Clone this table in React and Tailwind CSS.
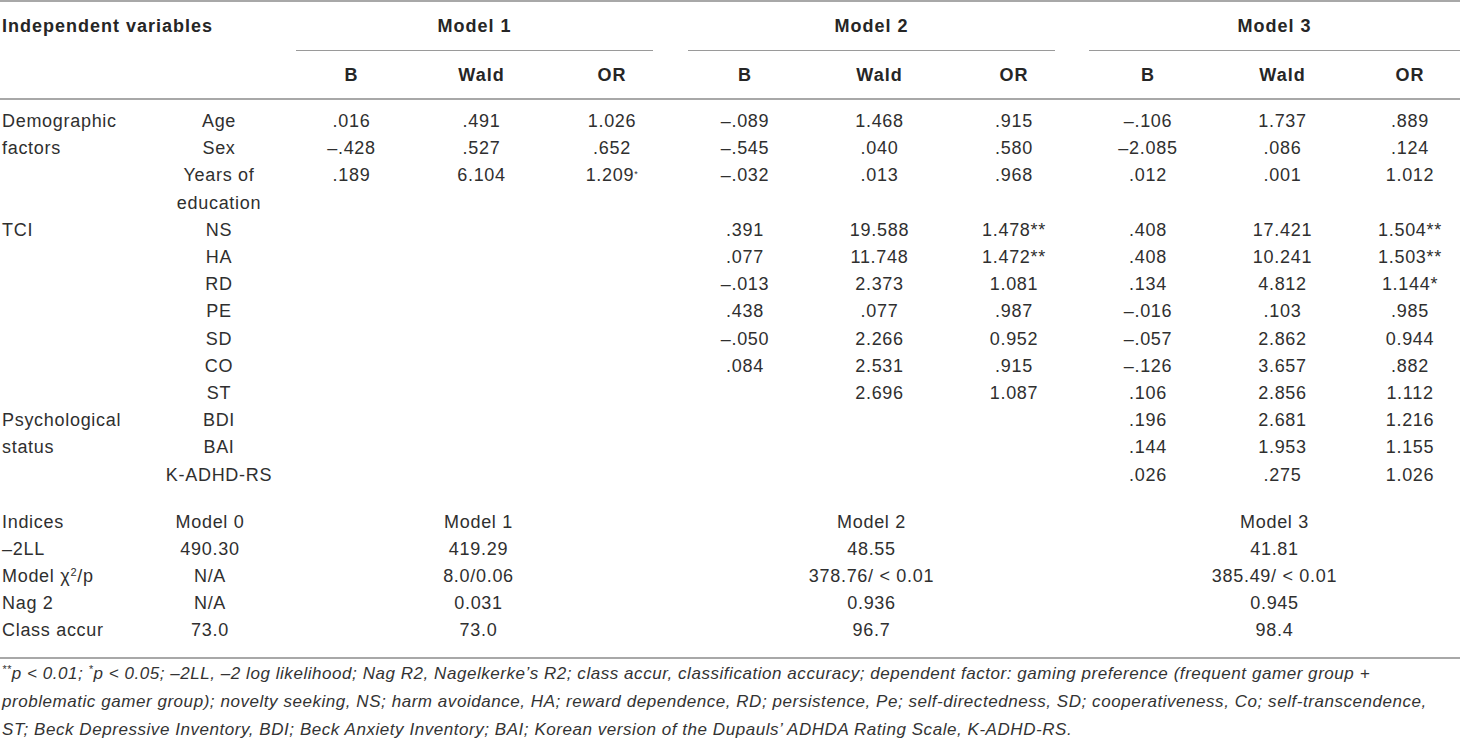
import React from "react";

const COLS =
  "grid grid-cols-[152px_134px_131px_129px_132px_134px_135px_134px_134px_135px_110px]";

const rows = [
  ["Demographic", "Age", ".016", ".491", "1.026", "–.089", "1.468", ".915", "–.106", "1.737", ".889"],
  ["factors", "Sex", "–.428", ".527", ".652", "–.545", ".040", ".580", "–2.085", ".086", ".124"],
  ["", "Years of education", ".189", "6.104", "1.209†", "–.032", ".013", ".968", ".012", ".001", "1.012"],
  ["TCI", "NS", "", "", "", ".391", "19.588", "1.478**", ".408", "17.421", "1.504**"],
  ["", "HA", "", "", "", ".077", "11.748", "1.472**", ".408", "10.241", "1.503**"],
  ["", "RD", "", "", "", "–.013", "2.373", "1.081", ".134", "4.812", "1.144*"],
  ["", "PE", "", "", "", ".438", ".077", ".987", "–.016", ".103", ".985"],
  ["", "SD", "", "", "", "–.050", "2.266", "0.952", "–.057", "2.862", "0.944"],
  ["", "CO", "", "", "", ".084", "2.531", ".915", "–.126", "3.657", ".882"],
  ["", "ST", "", "", "", "", "2.696", "1.087", ".106", "2.856", "1.112"],
  ["Psychological", "BDI", "", "", "", "", "", "", ".196", "2.681", "1.216"],
  ["status", "BAI", "", "", "", "", "", "", ".144", "1.953", "1.155"],
  ["", "K-ADHD-RS", "", "", "", "", "", "", ".026", ".275", "1.026"],
];

function Cell({ v, i }) {
  let content = v;
  if (v.endsWith("†")) {
    content = (
      <>
        {v.slice(0, -1)}
        <sup className="text-[9px]">*</sup>
      </>
    );
  }
  if (i === 0) return <div className="pl-[2px] text-left whitespace-nowrap">{content}</div>;
  if (i === 10) return <div className="pl-[10px] text-center">{content}</div>;
  return <div className="text-center">{content}</div>;
}

const indices = [
  [<>Indices</>, "Model 0", "Model 1", "Model 2", "Model 3"],
  [<>–2LL</>, "490.30", "419.29", "48.55", "41.81"],
  [
    <>
      Model χ<sup className="text-[11px]">2</sup>/p
    </>,
    "N/A",
    "8.0/0.06",
    "378.76/ < 0.01",
    "385.49/ < 0.01",
  ],
  [<>Nag 2</>, "N/A", "0.031", "0.936", "0.945"],
  [<>Class accur</>, "73.0", "73.0", "96.7", "98.4"],
];

export default function App() {
  return (
    <div className="w-[1460px] h-[738px] overflow-hidden bg-white text-[#2f2f2f] font-['Liberation_Sans','Helvetica','Arial',sans-serif] text-[18px] tracking-[0.7px]">
      <div className="border-t-2 border-[#a8a8a8]">
        {/* header row 1 */}
        <div className={`${COLS} pt-[11px] leading-[27px] font-bold tracking-[1px] text-[#262626]`}>
          <div className="col-span-2 pl-[2px] whitespace-nowrap">Independent variables</div>
          <div className="col-span-3 ml-[10px] mr-[25px] text-center border-b border-[#9a9a9a] pb-[10px]">Model 1</div>
          <div className="col-span-3 ml-[10px] mr-[26px] text-center border-b border-[#9a9a9a] pb-[10px]">Model 2</div>
          <div className="col-span-3 ml-[8px] text-center border-b border-[#9a9a9a] pb-[10px]">Model 3</div>
        </div>
        {/* header row 2 */}
        <div className={`${COLS} pt-[11px] pb-[9px] leading-[27px] font-bold tracking-[1px] text-[#262626] border-b-2 border-[#a8a8a8]`}>
          <div />
          <div />
          <div className="text-center">B</div>
          <div className="text-center">Wald</div>
          <div className="text-center">OR</div>
          <div className="text-center">B</div>
          <div className="text-center">Wald</div>
          <div className="text-center">OR</div>
          <div className="text-center">B</div>
          <div className="text-center">Wald</div>
          <div className="pl-[10px] text-center">OR</div>
        </div>

        {/* body */}
        <div className="pt-[8px] leading-[27.2px]">
          {rows.map((r, ri) => (
            <div key={ri} className={COLS}>
              {r.map((v, i) => (
                <Cell key={i} v={v} i={i} />
              ))}
            </div>
          ))}
        </div>

        {/* indices */}
        <div className="pt-[20px] pb-[13px] leading-[27px] border-b-2 border-[#a8a8a8]">
          {indices.map((r, ri) => (
            <div key={ri} className={COLS}>
              <div className="pl-[2px] whitespace-nowrap">{r[0]}</div>
              <div className="pr-[18px] text-center">{r[1]}</div>
              <div className="col-span-3 ml-[14px] mr-[21px] text-center">{r[2]}</div>
              <div className="col-span-3 ml-[10px] mr-[26px] text-center">{r[3]}</div>
              <div className="col-span-3 ml-[8px] text-center">{r[4]}</div>
            </div>
          ))}
        </div>

        {/* footnote */}
        <div className="pl-[2px] italic text-[17px] leading-[28px] tracking-[0.55px] text-[#333] whitespace-nowrap">
          <div className="pt-[1px]">
            <sup className="text-[11px]">**</sup>p &lt; 0.01; <sup className="text-[11px]">*</sup>p &lt; 0.05; –2LL, –2 log likelihood; Nag R2, Nagelkerke’s R2; class accur, classification accuracy; dependent factor: gaming preference (frequent gamer group +
          </div>
          <div>
            problematic gamer group); novelty seeking, NS; harm avoidance, HA; reward dependence, RD; persistence, Pe; self-directedness, SD; cooperativeness, Co; self-transcendence,
          </div>
          <div>
            ST; Beck Depressive Inventory, BDI; Beck Anxiety Inventory; BAI; Korean version of the Dupauls’ ADHDA Rating Scale, K-ADHD-RS.
          </div>
        </div>
      </div>
    </div>
  );
}
